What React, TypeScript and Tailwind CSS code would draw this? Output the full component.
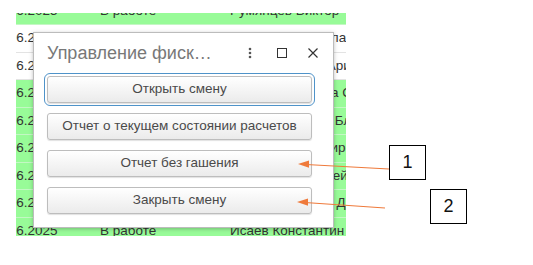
import React from "react";

const rows: { name: string; green: boolean }[] = [
  { name: "Румянцев Виктор", green: true },
  { name: "Анатольев Николай", green: false },
  { name: "Черноморцева Арина", green: false },
  { name: "Преображенцева Светлана", green: true },
  { name: "Красносельская Бланка", green: true },
  { name: "Фролов Владимир", green: true },
  { name: "Дмитриев Алексей", green: true },
  { name: "Рождественский Дмитрий", green: true },
  { name: "Исаев Константин", green: true },
];

function Btn({ label, focused }: { label: string; focused?: boolean }) {
  return (
    <div
      className={
        "w-[265px] h-[27px] flex items-center justify-center rounded-[3px] border border-[#bdbdbd] bg-gradient-to-b from-white to-[#ebebeb] shadow-[0_1px_1px_rgba(0,0,0,0.12)] text-[13.5px] text-[#4a4a4a] " +
        (focused ? "outline outline-1 outline-offset-2 outline-[#4f93c9]" : "")
      }
    >
      {label}
    </div>
  );
}

export default function App() {
  return (
    <div className="relative w-[533px] h-[265px] bg-white overflow-hidden font-['Liberation_Sans',Arial,sans-serif]">
      {/* background table */}
      <div className="ml-[16px] mt-[13px] w-[330px] h-[223px] overflow-hidden">
        <div className="-mt-[15.5px]">
          {rows.map((r, i) => (
            <div
              key={i}
              className={
                "flex items-center h-[27.5px] border-b text-[13.5px] text-[#333] whitespace-nowrap " +
                (r.green ? "bg-[#98fb98] border-[#c4f7c4]" : "bg-white border-[#e3e3e3]")
              }
            >
              <div className="-ml-[26px] w-[110px] shrink-0">12.06.2025</div>
              <div className="w-[130px] shrink-0">В работе</div>
              <div className="shrink-0">{r.name}</div>
            </div>
          ))}
        </div>
      </div>

      {/* dialog */}
      <div className="absolute left-[33px] top-[32px] w-[301px] bg-white border border-[#bcbcbc] shadow-[0_1px_4px_rgba(0,0,0,0.25)]">
        <div className="flex items-center h-[40px] pl-[13px]">
          <div className="w-[200px] text-[18px] text-[#787878] whitespace-nowrap">Управление фиск…</div>
          <svg width="6" height="12" viewBox="0 0 6 12" className="shrink-0">
            <circle cx="3" cy="2" r="1.3" fill="#555" />
            <circle cx="3" cy="6" r="1.3" fill="#555" />
            <circle cx="3" cy="10" r="1.3" fill="#555" />
          </svg>
          <svg width="10" height="10" viewBox="0 0 10 10" className="shrink-0 ml-[24px]">
            <rect x="0.5" y="0.5" width="9" height="9" fill="none" stroke="#333" strokeWidth="1" />
          </svg>
          <svg width="10" height="10" viewBox="0 0 10 10" className="shrink-0 ml-[21px]">
            <path d="M0.5 0.5 L9.5 9.5 M9.5 0.5 L0.5 9.5" stroke="#333" strokeWidth="1.2" />
          </svg>
        </div>
        <div className="flex flex-col gap-[10px] pl-[13px] pt-[3px] pb-[13px]">
          <Btn label="Открыть смену" focused />
          <Btn label="Отчет о текущем состоянии расчетов" />
          <Btn label="Отчет без гашения" />
          <Btn label="Закрыть смену" />
        </div>
      </div>

      {/* annotations */}
      <svg className="absolute left-0 top-0" width="533" height="265" viewBox="0 0 533 265">
        <line x1="389" y1="169" x2="306" y2="164.5" stroke="#ef7a3b" strokeWidth="1.2" />
        <polygon points="298,164 309,160.5 309,167.8" fill="#ef7a3b" />
        <line x1="385" y1="208" x2="305" y2="202.5" stroke="#ef7a3b" strokeWidth="1.2" />
        <polygon points="297,202 308,198.5 308,205.8" fill="#ef7a3b" />
      </svg>
      <div className="absolute left-[389px] top-[145px] w-[37px] h-[35px] border border-black bg-white flex items-center justify-center text-[18px] text-[#111]">
        1
      </div>
      <div className="absolute left-[430px] top-[189px] w-[37px] h-[35px] border border-black bg-white flex items-center justify-center text-[18px] text-[#111]">
        2
      </div>
    </div>
  );
}
